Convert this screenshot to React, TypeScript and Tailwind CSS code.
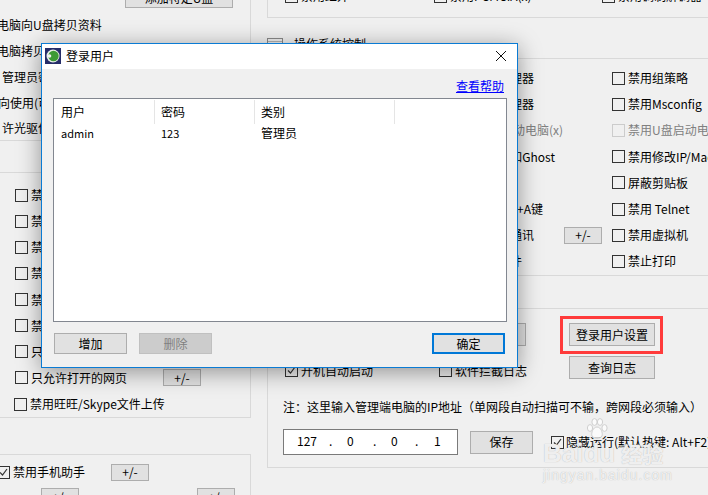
const font = { fontFamily: '"Noto Sans CJK SC", "Liberation Sans", sans-serif' };

const Check = ({ checked = false, disabled = false }: { checked?: boolean; disabled?: boolean }) => (
  <span
    className={
      "flex h-[13px] w-[13px] shrink-0 items-center justify-center border bg-transparent " +
      (disabled ? "border-[#cccccc]" : "border-[#333333]")
    }
  >
    {checked && (
      <svg width="11" height="11" viewBox="0 0 11 11" fill="none" stroke="#333333" strokeWidth="1.2">
        <path d="M2 5.5 L4.5 8 L9 2" />
      </svg>
    )}
  </span>
);

const Btn = ({
  label,
  className = "",
  tone = "border border-[#adadad] bg-[#e1e1e1] text-black",
}: {
  label: string;
  className?: string;
  tone?: string;
}) => (
  <div className={"flex shrink-0 items-center justify-center text-[12px] leading-none " + tone + " " + className}>
    {label}
  </div>
);

const Row = ({ label, className = "" }: { label: string; className?: string }) => (
  <div className={"flex h-[26.2px] items-center gap-[3px] whitespace-nowrap " + className}>
    <Check />
    <span>{label}</span>
  </div>
);

const LeftColumn = () => (
  <div className="flex w-[251px] shrink-0 flex-col overflow-hidden">
    <div className="flex h-[146px] flex-col border-b border-r border-[#d9d9d9]">
      <div className="flex h-[8px] items-end">
        <Btn label="添加特定U盘" className="ml-[125px] h-[20px] w-[108px]" />
      </div>
      <div className="ml-[-15px] mt-[4px] flex h-[26px] items-center whitespace-nowrap">禁电脑向U盘拷贝资料</div>
      <div className="ml-[-3px] flex h-[26px] items-center whitespace-nowrap">
        <span>电脑拷贝资料</span>
        <div className="ml-[55px] mt-[4px] h-[20px] w-[13px] shrink-0 border border-[#555555]" />
      </div>
      <div className="ml-[2px] flex h-[26px] items-center whitespace-nowrap">管理员密码</div>
      <div className="ml-[-2px] flex h-[26px] items-center whitespace-nowrap">向使用(可</div>
      <div className="ml-[2px] flex h-[24px] items-center whitespace-nowrap">许光驱使用</div>
    </div>

    <div className="mt-[31px] flex h-[246px] flex-col border-b border-r border-t border-[#d9d9d9] pl-[15px] pt-[9px]">
      <Row label="禁用网络游戏" />
      <Row label="禁用网络视频" />
      <Row label="禁用网络音乐" />
      <Row label="禁用网络炒股" />
      <Row label="禁用网络下载" />
      <Row label="禁用网页邮箱" />
      <Row label="只允许打开的程序" />
      <div className="flex h-[26px] items-center">
        <Row label="只允许打开的网页" />
        <Btn label="+/-" className="ml-[36px] h-[17px] w-[38px]" />
      </div>
      <div className="ml-[-53px] flex h-[26px] items-center pt-[1px]">
        <Btn label="+/-" className="h-[17px] w-[38px]" />
        <div className="ml-[14px] flex items-center gap-[3px] whitespace-nowrap">
          <Check />
          <span>禁用旺旺/Skype文件上传</span>
        </div>
      </div>
    </div>

    <div className="mt-[36px] flex-1 border-r border-t border-[#d9d9d9]">
      <div className="ml-[-3px] mt-[7px] flex h-[20px] items-center">
        <div className="flex items-center gap-[3px] whitespace-nowrap">
          <Check checked />
          <span>禁用手机助手</span>
        </div>
        <Btn label="+/-" className="ml-[26px] h-[17px] w-[38px]" />
      </div>
      <div className="mt-[6px] flex">
        <Btn label="+/-" className="ml-[41px] h-[17px] w-[38px]" />
        <Btn label="+/-" className="ml-[118px] h-[17px] w-[38px]" />
      </div>
    </div>
  </div>
);

const rightChecks = [
  { label: "禁用组策略" },
  { label: "禁用Msconfig" },
  { label: "禁用U盘启动电脑", disabled: true },
  { label: "禁用修改IP/Mac地址" },
  { label: "屏蔽剪贴板" },
  { label: "禁用 Telnet" },
  { label: "禁用虚拟机" },
  { label: "禁止打印" },
];

const RightColumn = () => (
  <div className="ml-[16px] flex min-w-0 flex-1 flex-col">
    <div className="flex h-[18px] items-end border-b border-l border-[#d9d9d9] pb-[13px] pl-[17px]">
      <div className="flex w-[149px] items-center gap-[3px] whitespace-nowrap">
        <Check />
        <span>禁用红外</span>
      </div>
      <div className="flex w-[168px] items-center gap-[3px] whitespace-nowrap">
        <Check />
        <span>禁用PCMCIA(x)</span>
      </div>
      <div className="flex items-center gap-[3px] whitespace-nowrap">
        <Check />
        <span>禁用调制解调器</span>
      </div>
    </div>

    <div className="flex h-[41px] items-end border-b border-[#d9d9d9] pb-[6px]">
      <svg width="16" height="14" viewBox="0 0 16 14" fill="none" stroke="#8a8a8a">
        <rect x="0.5" y="0.5" width="15" height="13" />
        <path d="M1 3.5 H15 M3 6.5 H13 M3 9.5 H13" stroke="#b5b5b5" />
      </svg>
      <span className="ml-[11px] whitespace-nowrap">操作系统控制</span>
    </div>

    <div className="flex h-[217px] border-b border-[#d9d9d9]">
      <div className="flex w-[345px] shrink-0 flex-col items-end pt-[6px]">
        <div className="mr-[78px] flex h-[26.2px] items-center whitespace-nowrap">禁用任务管理器</div>
        <div className="mr-[78px] flex h-[26.2px] items-center whitespace-nowrap">禁用设备管理器</div>
        <div className="mr-[49px] flex h-[26.2px] items-center whitespace-nowrap text-[#808080]">禁止重启动电脑(x)</div>
        <div className="mr-[57px] flex h-[26.2px] items-center whitespace-nowrap">禁用一键还原和Ghost</div>
        <div className="h-[26.2px]" />
        <div className="mr-[69px] flex h-[26.2px] items-center whitespace-nowrap">禁用Ctrl+A键</div>
        <div className="flex h-[26.2px] items-center whitespace-nowrap">
          <span>禁用局域网通讯</span>
          <Btn label="+/-" className="ml-[30px] h-[17px] w-[38px]" />
          <span className="w-[10px]" />
        </div>
        <div className="mr-[90px] flex h-[26.2px] items-center whitespace-nowrap">禁用聊天软件</div>
      </div>
      <div className="flex flex-col pt-[6px]">
        {rightChecks.map((item) => (
          <div
            key={item.label}
            className={
              "flex h-[26.2px] items-center gap-[3px] whitespace-nowrap " + (item.disabled ? "text-[#808080]" : "")
            }
          >
            <Check disabled={item.disabled} />
            <span>{item.label}</span>
          </div>
        ))}
      </div>
    </div>

    <div className="mt-[32px] flex h-[160px] flex-col border-b border-l border-t border-[#d9d9d9]">
      <div className="mt-[14px] flex">
        <Btn label="设置" className="ml-[172px] h-[23px] w-[86px]" />
        <Btn label="登录用户设置" className="ml-[43px] h-[23px] w-[86px]" />
      </div>
      <div className="mt-[10px] flex h-[23px] items-center pl-[17px]">
        <div className="mt-[6px] flex w-[154px] items-center gap-[3px] whitespace-nowrap">
          <Check checked />
          <span>开机自动启动</span>
        </div>
        <div className="mt-[6px] flex w-[130px] items-center gap-[3px] whitespace-nowrap">
          <Check />
          <span>软件拦截日志</span>
        </div>
        <Btn label="查询日志" className="h-[23px] w-[86px]" />
      </div>
      <div className="ml-[15px] mt-[19px] h-[18px] whitespace-nowrap leading-[18px]">
        注：这里输入管理端电脑的IP地址（单网段自动扫描可不输，跨网段必须输入）
      </div>
      <div className="ml-[15px] mt-[13px] flex items-center">
        <div className="flex h-[26px] w-[175px] shrink-0 items-center border border-[#7a7a7a] bg-white pl-[13px] pb-[2px]">
          <span className="w-[32px]">127</span>
          <span className="w-[18px]">.</span>
          <span className="w-[26px]">0</span>
          <span className="w-[18px]">.</span>
          <span className="w-[24px]">0</span>
          <span className="w-[19px]">.</span>
          <span>1</span>
        </div>
        <Btn label="保存" className="ml-[12px] h-[23px] w-[63px]" />
        <div className="ml-[18px] flex items-center gap-[2px] whitespace-nowrap">
          <Check checked />
          <span>隐藏运行(默认热键: Alt+F2)</span>
        </div>
      </div>
    </div>
  </div>
);

const Logo = () => (
  <svg width="16" height="16" viewBox="0 0 16 16">
    <rect width="16" height="16" fill="#262d69" />
    <circle cx="8" cy="8" r="6.5" fill="#e8efe8" />
    <circle cx="8.5" cy="8" r="5.2" fill="#3c9a35" />
    <circle cx="4.5" cy="8" r="1.8" fill="#f4f4f4" />
  </svg>
);

const Dialog = () => (
  <div className="absolute left-[41px] top-[43px] flex h-[325px] w-[477px] flex-col border border-[#0a7bd4] bg-[#f0f0f0] shadow-[0_4px_22px_rgba(0,0,0,0.4)]">
    <div className="flex h-[25px] shrink-0 items-center bg-white pb-[2px] pl-[3px] pr-[10px]">
      <Logo />
      <span className="ml-[5px]">登录用户</span>
      <svg width="12" height="12" viewBox="0 0 12 12" stroke="#111111" strokeWidth="1" className="ml-auto">
        <path d="M1 1 L11 11 M11 1 L1 11" />
      </svg>
    </div>
    <div className="flex h-[29px] shrink-0 items-center justify-end pr-[13px] pt-[4px]">
      <span className="text-[#0000ff] underline">查看帮助</span>
    </div>
    <div className="mx-[11px] h-[224px] w-[454px] shrink-0 border border-[#828790] bg-white">
      <div className="mt-[1px] flex h-[24px]">
        <div className="flex w-[101px] items-center border-r border-[#e5e5e5] pl-[7px]">用户</div>
        <div className="flex w-[100px] items-center border-r border-[#e5e5e5] pl-[6px]">密码</div>
        <div className="flex w-[140px] items-center border-r border-[#e5e5e5] pl-[6px]">类别</div>
      </div>
      <div className="flex h-[17px] items-center text-[11px]">
        <div className="w-[101px] pl-[7px]">admin</div>
        <div className="w-[100px] pl-[6px]">123</div>
        <div className="pl-[6px] text-[12px]">管理员</div>
      </div>
    </div>
    <div className="mt-[11px] flex pl-[12px]">
      <Btn label="增加" className="h-[21px] w-[73px]" />
      <Btn
        label="删除"
        tone="border border-[#c0c0c0] bg-[#cccccc] text-[#808080]"
        className="ml-[12px] h-[21px] w-[73px]"
      />
      <Btn
        label="确定"
        tone="border-2 border-[#0078d7] bg-[#e1e1e1] text-black"
        className="ml-[220px] h-[21px] w-[73px]"
      />
    </div>
  </div>
);

const Watermark = () => (
  <div className="absolute left-[543px] top-[417px] flex w-[130px] flex-col items-start text-white/80">
    <svg width="24" height="24" viewBox="0 0 24 24" fill="#ffffff" fillOpacity="0.75" stroke="#cfcfcf" className="ml-[42px]">
      <ellipse cx="5" cy="11" rx="2.6" ry="3.4" />
      <ellipse cx="9.5" cy="5" rx="2.6" ry="3.4" />
      <ellipse cx="15" cy="5" rx="2.6" ry="3.4" />
      <ellipse cx="19.5" cy="11" rx="2.6" ry="3.4" />
      <path d="M12 10 C8 10 6 16 7 19 C9 22 15 22 17 19 C18 16 16 10 12 10 Z" />
    </svg>
    <div className="mt-[2px] flex h-[20px] items-center whitespace-nowrap [text-shadow:0_0_1px_#a8a8a8]">
      <span className="text-[26px] font-bold leading-none" style={{ fontFamily: '"Liberation Sans", sans-serif' }}>
        Baidu
      </span>
      <span className="ml-[6px] text-[21px] font-bold leading-none">经验</span>
    </div>
    <div
      className="mt-[5px] whitespace-nowrap text-[14px] leading-none tracking-[1px] [text-shadow:0_0_1px_#a8a8a8]"
      style={{ fontFamily: '"Liberation Sans", sans-serif' }}
    >
      jingyan.baidu.com
    </div>
  </div>
);

export default function App() {
  return (
    <div
      className="relative flex h-[495px] w-[708px] overflow-hidden bg-[#f0f0f0] text-[12px] leading-[16px] text-black"
      style={font}
    >
      <LeftColumn />
      <RightColumn />
      <Dialog />
      <div className="absolute left-[560px] top-[316px] h-[38px] w-[103px] border-[3px] border-[#ff3b3b]" />
      <Watermark />
    </div>
  );
}
